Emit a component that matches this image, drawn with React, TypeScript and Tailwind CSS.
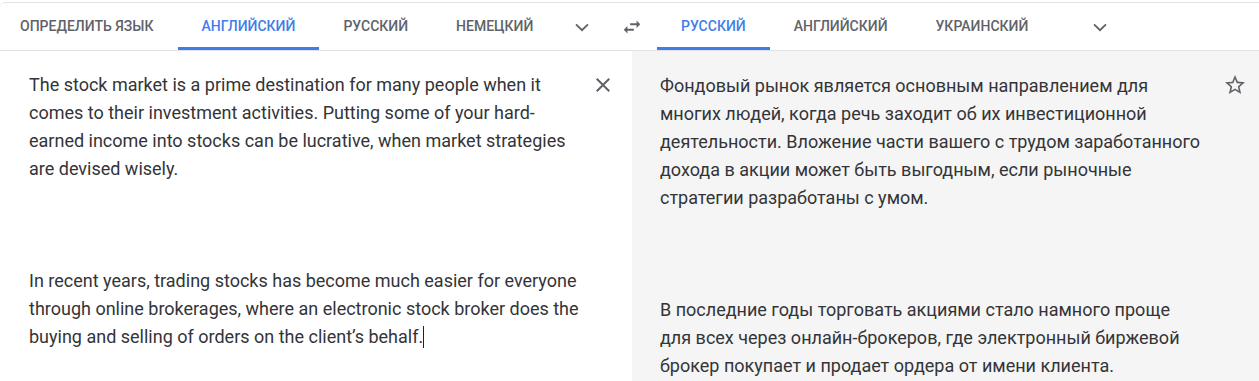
import React from "react";

const Chevron = () => (
  <svg width="26" height="26" viewBox="0 0 24 24" fill="none">
    <path d="M6.5 9.5l5.5 5.5 5.5-5.5" stroke="#5f6368" strokeWidth="1.7" />
  </svg>
);

const Swap = () => (
  <svg width="22" height="22" viewBox="0 0 24 24" fill="#5f6368">
    <path d="M6.99 11L3 15l3.99 4v-3H14v-2H6.99v-3zM21 9l-3.99-4v3H10v2h7.01v3L21 9z" />
  </svg>
);

const Close = () => (
  <svg width="24" height="24" viewBox="0 0 24 24" fill="#5f6368">
    <path d="M19 6.41L17.59 5 12 10.59 6.41 5 5 6.41 10.59 12 5 17.59 6.41 19 12 13.41 17.59 19 19 17.59 13.41 12z" />
  </svg>
);

const Star = () => (
  <svg width="24" height="24" viewBox="0 0 24 24" fill="#5f6368">
    <path d="M22 9.24l-7.19-.62L12 2 9.19 8.63 2 9.24l5.46 4.73L5.82 21 12 17.27 18.18 21l-1.63-7.03L22 9.24zM12 15.4l-3.76 2.27 1-4.28-3.32-2.88 4.38-.38L12 6.1l1.71 4.04 4.38.38-3.32 2.88 1 4.28L12 15.4z" />
  </svg>
);

function Tab({ label, active, first }: { label: string; active?: boolean; first?: boolean }) {
  return (
    <div
      className={
        "relative flex h-full shrink-0 items-center whitespace-nowrap " +
        (first ? "pl-5 pr-6 " : "px-6 ") +
        (active ? "text-[#3f7ee8]" : "text-[#5f6368]")
      }
    >
      {label}
      {active && <div className="absolute bottom-0 left-0 right-0 h-[3px] bg-[#3f7ee8]" />}
    </div>
  );
}

export default function App() {
  return (
    <div
      className="w-[1259px] h-[381px] overflow-hidden bg-white"
      style={{ fontFamily: "Roboto, 'Noto Sans', sans-serif" }}
    >
      <div className="mt-[2px] border-t border-[#e3e3e3] rounded-tl-md">
        <div className="flex h-[48px] items-stretch border-b border-[#e0e0e0] text-[14px] font-medium uppercase">
          <div className="flex w-[632px] shrink-0 items-stretch">
            <Tab label="Определить язык" first />
            <Tab label="Английский" active />
            <Tab label="Русский" />
            <Tab label="Немецкий" />
            <div className="flex w-[50px] shrink-0 items-center justify-center">
              <Chevron />
            </div>
            <div className="flex flex-1 items-center justify-end">
              <div className="-mr-[11px]">
                <Swap />
              </div>
            </div>
          </div>
          <div className="flex items-stretch pl-[25px]">
            <Tab label="Русский" active />
            <Tab label="Английский" />
            <Tab label="Украинский" />
            <div className="ml-[35px] flex w-[26px] items-center justify-center">
              <Chevron />
            </div>
          </div>
        </div>
        <div className="flex h-[340px] text-[18px] leading-[28px] text-[#333438]">
          <div className="flex w-[632px] shrink-0 bg-white pl-[29px] pt-[20px]">
            <div className="w-[555px] whitespace-pre-wrap">
              {"The stock market is a prime destination for many people when it comes to their investment activities. Putting some of your hard-earned income into stocks can be lucrative, when market strategies are devised wisely.\n\n\n\nIn recent years, trading stocks has become much easier for everyone through online brokerages, where an electronic stock broker does the buying and selling of orders on the client\u2019s behalf."}
              <span className="inline-block h-[22px] w-0 border-l border-[#222] align-[-5px]" />
            </div>
            <div className="ml-[7px] mt-[2px]">
              <Close />
            </div>
          </div>
          <div className="flex flex-1 bg-[#f5f5f5] pl-[28px] pt-[21px]">
            <div className="w-[542px] shrink-0 whitespace-pre-wrap">
              {"Фондовый рынок является основным направлением для многих людей, когда речь заходит об их инвестиционной деятельности. Вложение части вашего с трудом заработанного дохода в акции может быть выгодным, если рыночные стратегии разработаны с умом.\n\n\n\nВ последние годы торговать акциями стало намного проще для всех через онлайн-брокеров, где электронный биржевой брокер покупает и продает ордера от имени клиента."}
            </div>
            <div className="ml-[21px] mt-[1px]">
              <Star />
            </div>
          </div>
        </div>
      </div>
    </div>
  );
}
